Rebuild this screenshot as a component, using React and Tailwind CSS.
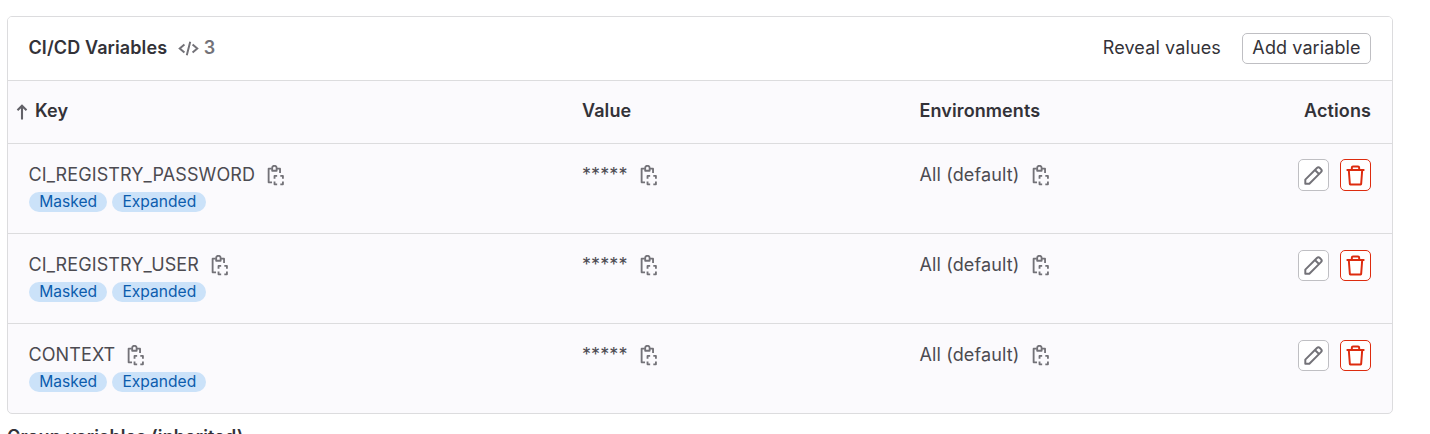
const variables = ["CI_REGISTRY_PASSWORD", "CI_REGISTRY_USER", "CONTEXT"];

function CopyIcon() {
  return (
    <svg className="h-[21px] w-[21px] shrink-0 text-[#737278]" viewBox="0 0 16 16" fill="none" stroke="currentColor" strokeWidth="1.4" strokeLinejoin="round">
      <path d="M4.6 13.2H2V2.8H4.4M8.4 2.8h2.3V6" />
      <path d="M4.7 4.4V2.3a1.7 1.7 0 0 1 3.4 0v2.1z" />
      <path d="M6.5 10.4V8.3H8.5M10.9 8.3h2v2.1M12.9 12.6v2.1h-2M8.5 14.7h-2v-2.1" />
    </svg>
  );
}

function PencilIcon() {
  return (
    <svg className="h-[21px] w-[21px]" viewBox="0 0 16 16" fill="none" stroke="#737278" strokeWidth="1.5" strokeLinejoin="round">
      <path d="M1.75 14.25v-3.1l8.85-8.85a1.6 1.6 0 0 1 2.26 0l.84.84a1.6 1.6 0 0 1 0 2.26L4.85 14.25zM9.1 3.8l3.1 3.1" />
    </svg>
  );
}

function TrashIcon() {
  return (
    <svg className="h-[21px] w-[21px]" viewBox="0 0 16 16" fill="none" stroke="#dd2b0e" strokeWidth="1.5">
      <path d="M1.2 3.75h13.6M5.2 3.5V2.1q0-.9.9-.9h3.8q.9 0 .9.9V3.5M2.9 4l.8 10.5q0 .3.3.3h8q.3 0 .3-.3L13.1 4" strokeLinejoin="round" />
    </svg>
  );
}

function Badge({ children }) {
  return (
    <span className="flex h-5 items-center rounded-full bg-[#cbe2f9] px-[10.2px] pb-px text-[15.6px] leading-5 text-[#0b5cad]">
      {children}
    </span>
  );
}

function Row({ name }) {
  return (
    <div className="group grid h-[90px] grid-cols-[554px_337px_1fr_auto] border-t border-[#dcdcde] pr-[21px] pl-[20.5px] pt-[15px] text-[18px] text-[#4c4b51]">
      <div>
        <div className="flex h-[33px] items-start gap-[11px] pt-[6px]">
          <span className="leading-[20px] tracking-[0.1px]">{name}</span>
          <CopyIcon />
        </div>
        <div className="flex gap-[5px] pl-[0.5px]">
          <Badge>Masked</Badge>
          <Badge>Expanded</Badge>
        </div>
      </div>
      <div className="flex items-start gap-[11.5px] pt-[6px]">
        <span className="-ml-[0.5px] leading-[20px] tracking-[0.1px]">*****</span>
        <CopyIcon />
      </div>
      <div className="flex items-start gap-[11.5px] pt-[6px]">
        <span className="leading-[20px] tracking-[0.12px]">All (default)</span>
        <CopyIcon />
      </div>
      <div className="flex items-start gap-[11px] group-[:not(:nth-child(3))]:pt-px">
        <button className="flex h-8 w-[31px] items-center justify-center rounded-[5px] border border-[#bfbfc3] bg-white group-[:not(:nth-child(3))]:h-[31px]">
          <PencilIcon />
        </button>
        <button className="flex h-8 w-[31px] items-center justify-center rounded-[5px] border border-[#dd2b0e] bg-white group-[:not(:nth-child(3))]:h-[31px]">
          <TrashIcon />
        </button>
      </div>
    </div>
  );
}

export default function App() {
  return (
    <div className="h-[434px] overflow-hidden bg-white pt-4 pl-[7px] font-['Inter',sans-serif] text-[18px] text-[#333238]">
      <section className="h-[398px] w-[1386px] overflow-hidden rounded-[5px] border border-[#dcdcde] bg-[#fbfafd]">
        <header className="flex h-[63px] items-center bg-white pr-[21px] pl-[20.5px]">
          <h2 className="pb-[2px] font-semibold tracking-[0.1px]">CI/CD Variables</h2>
          <svg className="ml-[10.5px] h-[21px] w-[21px]" viewBox="0 0 16 16" fill="none" stroke="#737278" strokeWidth="1.5">
            <path d="M4.9 4.9 1.3 8l3.6 3.1M11.1 4.9 14.7 8l-3.6 3.1M9.3 2.8 6.7 13.2" />
          </svg>
          <span className="ml-[5px] pb-[2px] font-semibold text-[#737278]">3</span>
          <button className="ml-auto pb-[2px] tracking-[0.13px]">Reveal values</button>
          <button className="ml-[21px] flex h-[31px] w-[129px] items-center justify-center rounded-[5px] border border-[#bfbfc3] bg-white pb-[2px] tracking-[0.1px]">
            Add variable
          </button>
        </header>
        <div className="grid h-[63px] grid-cols-[574px_337.5px_1fr_auto] items-center border-t border-[#dcdcde] pr-[21px] pb-[3px] font-semibold tracking-[0.1px]">
          <div className="flex items-center pl-[8px]">
            <svg className="mt-[3px] h-[18px] w-3" viewBox="0 0 12 18" fill="none" stroke="#626168" strokeWidth="2.1">
              <path d="M6 16.5V3M1.5 7.2 6 2.7l4.5 4.5" />
            </svg>
            <span className="ml-[7px]">Key</span>
          </div>
          <span>Value</span>
          <span>Environments</span>
          <span>Actions</span>
        </div>
        {variables.map((name) => (
          <Row key={name} name={name} />
        ))}
      </section>
      <h3 className="mt-[9px] font-semibold tracking-[0.12px]">Group variables (inherited)</h3>
    </div>
  );
}
